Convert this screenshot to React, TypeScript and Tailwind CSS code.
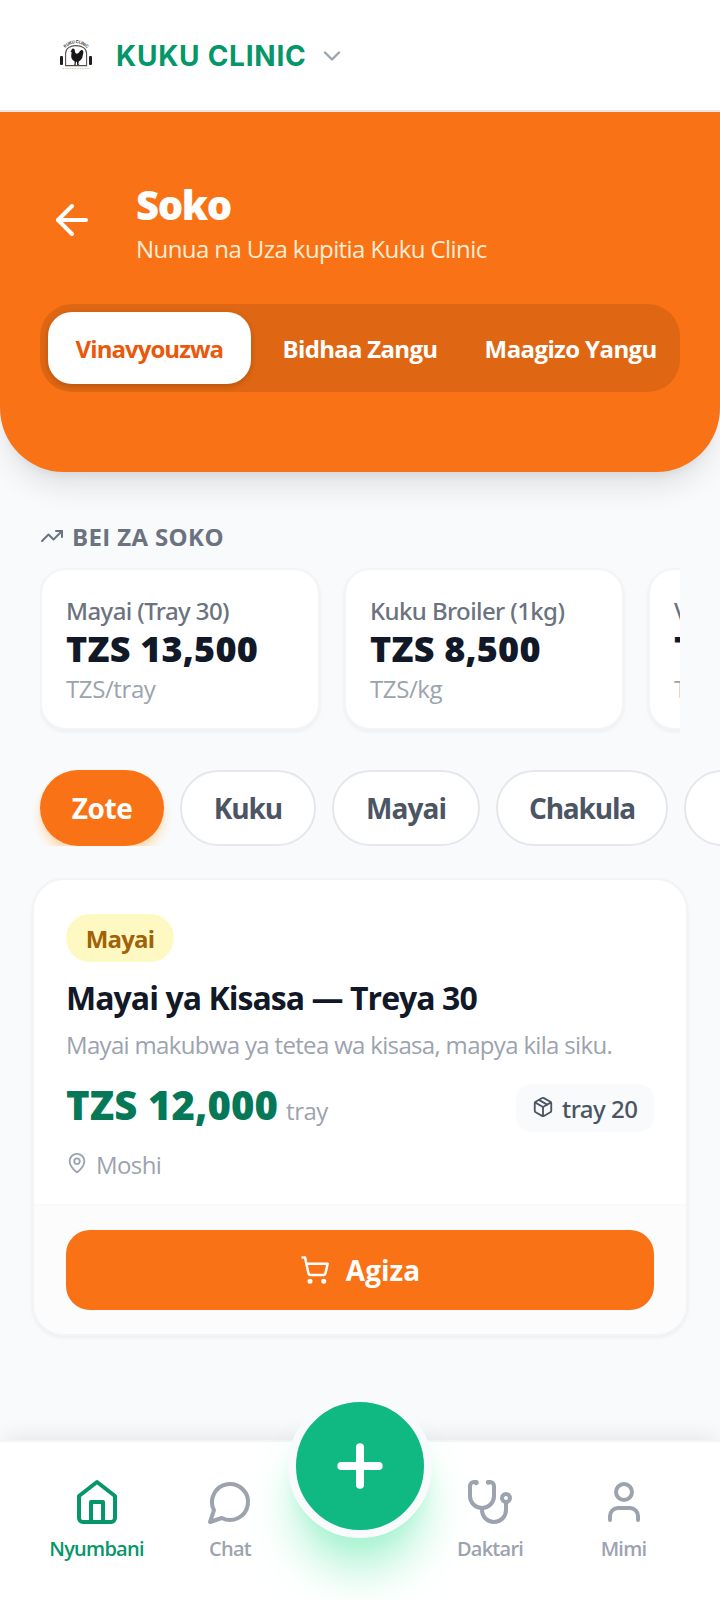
import React from "react";
import { ArrowLeft, ChevronDown, MapPin, Package, Plus, ShoppingCart, TrendingUp } from "lucide-react";

interface PriceType {
  name: string;
  price: string;
  unit: string;
}

const tabs = [
  { label: "Vinavyouzwa", spacing: "tracking-[-0.95px]" },
  { label: "Bidhaa Zangu", spacing: "tracking-[-0.7px]" },
  { label: "Maagizo Yangu", spacing: "tracking-[-0.6px]" },
];

const prices: PriceType[] = [
  { name: "Mayai (Tray 30)", price: "TZS 13,500", unit: "TZS/tray" },
  { name: "Kuku Broiler (1kg)", price: "TZS 8,500", unit: "TZS/kg" },
  { name: "Vifaranga", price: "TZS 2,000", unit: "TZS/kifaranga" },
];

const categories = [
  { label: "Zote", style: "w-[124px] tracking-[-0.4px]" },
  { label: "Kuku", style: "w-[136px] tracking-[-1.1px]" },
  { label: "Mayai", style: "w-[148px] tracking-[-0.9px]" },
  { label: "Chakula", style: "w-[172px] tracking-[-1.2px]" },
  { label: "Dawa", style: "w-[180px] tracking-[-0.9px]" },
];

const IconBase = ({ children }: { children: React.ReactNode }) => (
  <svg
    viewBox="0 0 24 24"
    fill="none"
    stroke="currentColor"
    strokeWidth="2"
    strokeLinecap="round"
    strokeLinejoin="round"
    className="size-12"
  >
    {children}
  </svg>
);

const IconHome = () => (
  <IconBase>
    <path d="m3 9 9-7 9 7v11a2 2 0 0 1-2 2H5a2 2 0 0 1-2-2z" />
    <polyline points="9 22 9 12 15 12 15 22" />
  </IconBase>
);

const IconChat = () => (
  <IconBase>
    <path d="M7.9 20A9 9 0 1 0 4 16.1L2 22Z" />
  </IconBase>
);

const IconDoctor = () => (
  <IconBase>
    <path d="M4.8 2.3A.3.3 0 1 0 5 2H4a2 2 0 0 0-2 2v5a6 6 0 0 0 6 6 6 6 0 0 0 6-6V4a2 2 0 0 0-2-2h-1a.2.2 0 1 0 .3.3" />
    <path d="M8 15v1a6 6 0 0 0 6 6 6 6 0 0 0 6-6v-4" />
    <circle cx="20" cy="10" r="2" />
  </IconBase>
);

const IconUser = () => (
  <IconBase>
    <path d="M19 21v-2a4 4 0 0 0-4-4H9a4 4 0 0 0-4 4v2" />
    <circle cx="12" cy="7" r="4" />
  </IconBase>
);

const Logo = () => (
  <svg viewBox="0 0 32 32" className="size-8 overflow-visible">
    <path id="logo-arc" d="M4.6 8.6 Q16 -2.4 27.4 8.6" fill="none" />
    <text fontSize="4.2" fontWeight="700" fill="#444" fontFamily="Inter, sans-serif">
      <textPath href="#logo-arc" startOffset="0.5" textLength="25">KUKU CLINIC</textPath>
    </text>
    <path d="M5.6 25.6V13.5C5.6 8.5 10 5.6 16 5.6s10.6 2.9 10.6 7.9v12.1Z" fill="#fff" stroke="#57504c" strokeWidth="1.1" />
    <rect x="0" y="16" width="3" height="9" rx="1" fill="#1f1d1d" />
    <rect x="29" y="16" width="3" height="9" rx="1" fill="#1f1d1d" />
    <path
      d="M12.4 8.8c1.3-.6 2.3.4 2.4 1.7.1 1.9.9 3.2 2.2 3.2 1.8-.1 2.4-2.6 4.3-3.6 1.3-.5 2.2.7 2 2.3-.1 1.5-.5 2-.6 3.4-.3 2.9-2 4.7-4 5.6l-.3 2.8 1.2.9h-2.4l-.3-3.3h-.9l-.4 3.3h-2l1.1-.9-.2-3c-2.2-1.2-3.6-3.2-3.3-5.8.2-1.5.5-2.6.2-3.5l-1-.5.9-.8c.1-.8.5-1.5 1.1-1.8Z"
      fill="#171515"
    />
    <path d="M2.2 28.6h28" stroke="#d6c8b8" strokeWidth="1" strokeDasharray="1.6 .9" />
  </svg>
);

const NavItem = ({ label, className, children }: { label: string; className: string; children: React.ReactNode }) => (
  <button className={`flex flex-col items-center gap-[9px] pt-9 ${className}`}>
    {children}
    <span className="text-[20px] leading-7 font-semibold tracking-[-0.75px]">{label}</span>
  </button>
);

const PriceCard = ({ item }: { item: PriceType }) => (
  <div className="h-[162px] w-[280px] shrink-0 rounded-[26px] border-2 border-[#f3f4f6] bg-white px-6 pt-[25px] whitespace-nowrap shadow-[0_2px_4px_rgba(0,0,0,0.05)]">
    <p className="font-['Noto_Sans',sans-serif] text-[24px] leading-8 font-medium tracking-[-0.6px] text-[#6b7280]">{item.name}</p>
    <p className="mt-1 text-[36px] leading-9 font-extrabold tracking-[0.2px] text-[#111827]">{item.price}</p>
    <p className="mt-1.5 text-[24px] leading-8 tracking-[-0.4px] text-[#9ca3af]">{item.unit}</p>
  </div>
);

export default function App() {
  return (
    <div className="flex h-[1600px] w-[720px] flex-col overflow-hidden bg-[#f9fafb] font-['Open_Sans','Noto_Sans',sans-serif]">
      <header className="flex h-28 shrink-0 items-center border-b-2 border-[#e5e7eb] bg-white pt-0.5 pl-[60px]">
        <Logo />
        <span className="ml-6 font-[Inter,sans-serif] text-[28px] leading-10 font-bold tracking-[0.75px] text-[#059669]">
          KUKU CLINIC
        </span>
        <ChevronDown className="ml-3 size-7 text-[#9ca3af]" />
      </header>

      <section className="h-[360px] shrink-0 rounded-b-[64px] bg-[#f97316] px-10 pt-[69px] shadow-[0_20px_30px_-6px_rgba(0,0,0,0.1),0_8px_12px_-8px_rgba(0,0,0,0.1)]">
        <div className="flex items-start">
          <button className="mt-[7px] p-2 text-white">
            <ArrowLeft className="size-12" />
          </button>
          <div className="ml-8">
            <h1 className="text-[40px] leading-12 font-extrabold tracking-[-1.4px] text-white">Soko</h1>
            <p className="mt-1 text-[24px] leading-8 tracking-[-0.58px] text-[#ffedd5]">Nunua na Uza kupitia Kuku Clinic</p>
          </div>
        </div>
        <div className="mt-[39px] grid h-[88px] grid-cols-3 gap-2 rounded-[32px] bg-black/10 p-2">
          {tabs.map((tab, i) => (
            <button
              key={tab.label}
              className={`rounded-3xl pt-0.5 text-[24px] leading-8 font-bold whitespace-nowrap ${tab.spacing} ${
                i === 0 ? "bg-white text-[#ea580c] shadow-[0_2px_6px_rgba(0,0,0,0.2)]" : "text-white"
              }`}
            >
              {tab.label}
            </button>
          ))}
        </div>
      </section>

      <main className="flex-1">
        <div className="px-10 pt-[49px]">
          <h2 className="flex items-start gap-2 text-[24px] leading-8 font-bold tracking-[0.37px] text-[#6b7280]">
            <TrendingUp className="mt-[3px] size-6" />
            BEI ZA SOKO
          </h2>
          <div className="mt-[15px] flex gap-6 overflow-hidden pb-1">
            {prices.map((item) => (
              <PriceCard key={item.name} item={item} />
            ))}
          </div>
        </div>

        <div className="mt-9 flex gap-4 overflow-hidden pl-10">
          {categories.map((cat, i) => (
            <button
              key={cat.label}
              className={`h-[76px] shrink-0 rounded-full text-[28px] leading-10 font-bold ${cat.style} ${
                i === 0
                  ? "bg-[#f97316] text-white shadow-[0_8px_12px_-2px_#fed7aa,0_4px_8px_-4px_#fed7aa]"
                  : "border-2 border-[#e5e7eb] bg-white text-[#4b5563]"
              }`}
            >
              {cat.label}
            </button>
          ))}
        </div>

        <article className="mx-8 mt-8 overflow-hidden rounded-[32px] border-2 border-[#f3f4f6] bg-white shadow-[0_2px_4px_rgba(0,0,0,0.05)]">
          <div className="h-[324px] px-8 pt-[34px]">
            <span className="flex h-12 w-[108px] items-center justify-center rounded-3xl bg-[#fef9c3] pt-0.5 text-[24px] leading-8 font-bold tracking-[-0.8px] text-[#a16207]">
              Mayai
            </span>
            <h3 className="mt-4 text-[32px] leading-10 font-bold tracking-[-0.95px] text-[#111827]">Mayai ya Kisasa — Treya 30</h3>
            <p className="mt-[11px] text-[24px] leading-8 tracking-[-0.67px] text-[#9ca3af]">
              Mayai makubwa ya tetea wa kisasa, mapya kila siku.
            </p>
            <div className="mt-5 flex h-[51px] items-start justify-between">
              <div className="flex items-baseline gap-2 leading-12">
                <span className="text-[40px] font-extrabold tracking-[0.1px] text-[#047857]">TZS 12,000</span>
                <span className="text-[24px] tracking-[-0.5px] text-[#9ca3af]">tray</span>
              </div>
              <div className="mt-[3px] flex h-12 w-[138px] gap-2 rounded-2xl bg-[#f9fafb] pl-4 text-[24px] text-[#4b5563]">
                <Package className="mt-3 size-[22px] shrink-0" />
                <span className="pt-[9px] font-['Noto_Sans',sans-serif] leading-8 font-medium tracking-[-0.5px] whitespace-nowrap">
                  tray 20
                </span>
              </div>
            </div>
            <div className="mt-[17px] flex gap-2 text-[24px] leading-8 tracking-[-0.6px] text-[#9ca3af]">
              <MapPin className="mt-[3px] size-[22px]" />
              Moshi
            </div>
          </div>
          <div className="border-t-2 border-[#f9fafb] bg-[#fcfcfd] px-8 py-6">
            <button className="flex h-20 w-full items-center justify-center gap-4 rounded-3xl bg-[#f97316] text-[28px] leading-10 font-bold text-white">
              <ShoppingCart className="size-[30px]" />
              Agiza
            </button>
          </div>
        </article>
      </main>

      <nav className="flex h-40 shrink-0 border-t-2 border-[#f3f4f6] bg-white px-[30px] text-[#9ca3af] shadow-[0_-8px_20px_-4px_rgba(0,0,0,0.08)]">
        <NavItem label="Nyumbani" className="w-[133px] text-[#059669]">
          <IconHome />
        </NavItem>
        <NavItem label="Chat" className="w-[134px]">
          <IconChat />
        </NavItem>
        <div className="flex w-[126px] justify-center">
          <button className="-mt-12 flex size-36 shrink-0 items-center justify-center rounded-full border-8 border-[#f9fafb] bg-[#10b981] text-white shadow-[0_40px_50px_-10px_#a7f3d0,0_16px_20px_-12px_#a7f3d0]">
            <Plus className="size-16" strokeWidth={3} />
          </button>
        </div>
        <NavItem label="Daktari" className="w-[134px]">
          <IconDoctor />
        </NavItem>
        <NavItem label="Mimi" className="w-[133px]">
          <IconUser />
        </NavItem>
      </nav>
    </div>
  );
}
